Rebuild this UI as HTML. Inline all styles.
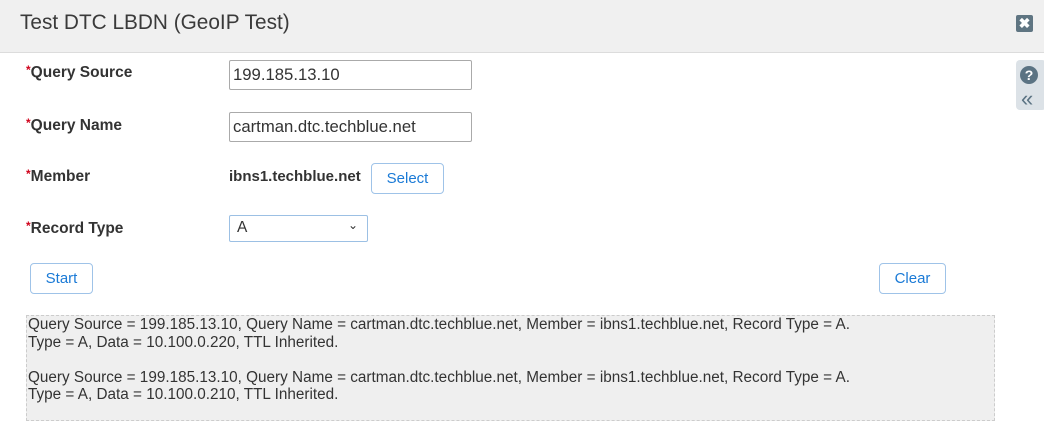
<!DOCTYPE html>
<html><head><style>
body{margin:0;width:1044px;height:421px;background:#fff;font-family:"Liberation Sans",sans-serif;position:relative;overflow:hidden;color:#333}
.a{position:absolute}
.hdr{left:0;top:0;width:1044px;height:52px;background:#f0f0f0;border-bottom:1px solid #dcdcdc}
.title{left:20px;top:11px;font-size:20.8px;color:#3a3a3a}
.lbl{font-size:15.5px;font-weight:bold;color:#333}
.lbl b{color:#d0021b;font-size:12px;vertical-align:top;position:relative;top:-1px}
.inp{box-sizing:border-box;border:1px solid #aaa;border-radius:2px;font-size:16.7px;color:#333;padding:4px 3px;background:#fff}
.btn{box-sizing:border-box;border:1px solid #9fc3e8;border-radius:4px;color:#1a7ad6;font-size:15px;text-align:center;background:#fff}
.out{left:26px;top:315px;width:969px;height:106px;box-sizing:border-box;background:#efefef;border:1px dashed #ccc;font-size:15.3px;line-height:17.5px;padding:0 1px;color:#333}
</style></head><body>
<div class="a hdr"></div>
<div class="a title">Test DTC LBDN (GeoIP Test)</div>
<div class="a" style="left:1016px;top:15px;width:17px;height:17px;background:#5f7582;border-radius:2px;color:#fff;font-size:14px;font-weight:bold;text-align:center;line-height:17px">✖</div>
<div class="a" style="left:1016px;top:60px;width:30px;height:50px;background:#dce2e7;border-radius:4px"></div>
<div class="a" style="left:1020px;top:66px;width:18px;height:18px;background:#5b7383;border-radius:50%;color:#fff;font-weight:bold;font-size:14px;text-align:center;line-height:18px">?</div>
<div class="a" style="left:1021px;top:86px;color:#5b7383;font-size:22px">«</div>

<div class="a lbl" style="left:26px;top:64px"><b>*</b>Query Source</div>
<div class="a inp" style="left:229px;top:60px;width:243px;height:30px">199.185.13.10</div>
<div class="a lbl" style="left:26px;top:117px"><b>*</b>Query Name</div>
<div class="a inp" style="left:229px;top:112px;width:243px;height:30px">cartman.dtc.techblue.net</div>
<div class="a lbl" style="left:26px;top:168px"><b>*</b>Member</div>
<div class="a lbl" style="left:229px;top:168px;font-size:15px">ibns1.techblue.net</div>
<div class="a btn" style="left:371px;top:163px;width:73px;height:31px;line-height:29px">Select</div>
<div class="a lbl" style="left:26px;top:220px"><b>*</b>Record Type</div>
<div class="a inp" style="left:229px;top:215px;width:139px;height:27px;border-color:#9cc0e4;padding:3px 7px;font-size:15.5px">A<span style="position:absolute;right:9px;top:2px;font-size:12px">⌄</span></div>
<div class="a btn" style="left:30px;top:263px;width:63px;height:31px;line-height:29px">Start</div>
<div class="a btn" style="left:879px;top:263px;width:67px;height:31px;line-height:29px">Clear</div>
<div class="a out">Query Source = 199.185.13.10, Query Name = cartman.dtc.techblue.net, Member = ibns1.techblue.net, Record Type = A.<br>Type = A, Data = 10.100.0.220, TTL Inherited.<br><br>Query Source = 199.185.13.10, Query Name = cartman.dtc.techblue.net, Member = ibns1.techblue.net, Record Type = A.<br>Type = A, Data = 10.100.0.210, TTL Inherited.</div>
</body></html>
